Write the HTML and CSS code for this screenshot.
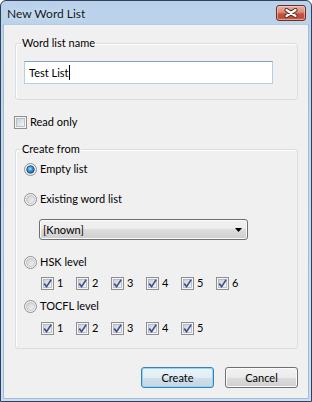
FILE: index.html
```html
<!DOCTYPE html>
<html lang="en">
<head>
  <meta charset="UTF-8" />
  <title>New Word List</title>
  <link rel="stylesheet" href="styles.css">
</head>
<body>

  <div class="window">
    <!-- Title bar -->
    <div class="titlebar">
      <span class="title">New Word List</span>
      <button class="close-btn" aria-label="Close">
        <svg width="14" height="10" viewBox="0 0 14 10">
          <path d="M2.5 2 L11.5 8 M11.5 2 L2.5 8" stroke="#4a1f1a" stroke-width="4" stroke-linecap="round" fill="none"/>
          <path d="M2.5 2 L11.5 8 M11.5 2 L2.5 8" stroke="#fff" stroke-width="2.3" stroke-linecap="round" fill="none"/>
        </svg>
      </button>
    </div>

    <!-- Dialog body -->
    <div class="client">
      <fieldset class="group group-name">
        <legend>Word list name</legend>
        <div class="textbox">Test List<span class="caret"></span></div>
      </fieldset>

      <div class="check read-only">
        <svg class="box" width="13" height="13"><use href="#cb-off"/></svg>
        <span>Read only</span>
      </div>

      <fieldset class="group group-source">
        <legend>Create from</legend>

        <div class="option opt-empty">
          <svg class="radio" width="13" height="13"><use href="#radio-on"/></svg>
          <span>Empty list</span>
        </div>

        <div class="option opt-existing">
          <svg class="radio" width="13" height="13"><use href="#radio-off"/></svg>
          <span>Existing word list</span>
        </div>

        <div class="combo">
          <span>[Known]</span>
          <svg width="7" height="4" viewBox="0 0 7 4"><path d="M0 0 H7 L3.5 4 Z" fill="#000"/></svg>
        </div>

        <div class="option opt-hsk">
          <svg class="radio" width="13" height="13"><use href="#radio-off"/></svg>
          <span>HSK level</span>
        </div>

        <div class="levels levels-hsk">
          <div class="check level"><svg class="box" width="13" height="13"><use href="#cb-on"/></svg><span>1</span></div>
          <div class="check level"><svg class="box" width="13" height="13"><use href="#cb-on"/></svg><span>2</span></div>
          <div class="check level"><svg class="box" width="13" height="13"><use href="#cb-on"/></svg><span>3</span></div>
          <div class="check level"><svg class="box" width="13" height="13"><use href="#cb-on"/></svg><span>4</span></div>
          <div class="check level"><svg class="box" width="13" height="13"><use href="#cb-on"/></svg><span>5</span></div>
          <div class="check level"><svg class="box" width="13" height="13"><use href="#cb-on"/></svg><span>6</span></div>
        </div>

        <div class="option opt-tocfl">
          <svg class="radio" width="13" height="13"><use href="#radio-off"/></svg>
          <span>TOCFL level</span>
        </div>

        <div class="levels levels-tocfl">
          <div class="check level"><svg class="box" width="13" height="13"><use href="#cb-on"/></svg><span>1</span></div>
          <div class="check level"><svg class="box" width="13" height="13"><use href="#cb-on"/></svg><span>2</span></div>
          <div class="check level"><svg class="box" width="13" height="13"><use href="#cb-on"/></svg><span>3</span></div>
          <div class="check level"><svg class="box" width="13" height="13"><use href="#cb-on"/></svg><span>4</span></div>
          <div class="check level"><svg class="box" width="13" height="13"><use href="#cb-on"/></svg><span>5</span></div>
        </div>
      </fieldset>

      <!-- Dialog buttons -->
      <div class="buttons">
        <button class="btn btn-default">Create</button>
        <button class="btn">Cancel</button>
      </div>
    </div>
  </div>

  <!-- Shared glyphs for checkboxes and radio buttons -->
  <svg class="defs" width="0" height="0">
    <defs>
      <linearGradient id="box-fill" x1="0" y1="0" x2="1" y2="1">
        <stop offset="0" stop-color="#c9ced6"/>
        <stop offset="1" stop-color="#f7f8f9"/>
      </linearGradient>
      <linearGradient id="radio-fill" x1="0" y1="0" x2="1" y2="1">
        <stop offset="0" stop-color="#c7ccd2"/>
        <stop offset="1" stop-color="#f8f8f8"/>
      </linearGradient>
      <radialGradient id="dot-fill" cx="0.45" cy="0.4" r="0.6">
        <stop offset="0" stop-color="#b5ecff"/>
        <stop offset="0.45" stop-color="#3d9ad6"/>
        <stop offset="1" stop-color="#1b5590"/>
      </radialGradient>

      <symbol id="cb-off" viewBox="0 0 13 13">
        <rect x="0.5" y="0.5" width="12" height="12" fill="#f4f4f4" stroke="#8e8f8f"/>
        <rect x="2.5" y="2.5" width="8" height="8" fill="url(#box-fill)" stroke="#b0b5bb" stroke-width="0.8"/>
      </symbol>
      <symbol id="cb-on" viewBox="0 0 13 13">
        <use href="#cb-off"/>
        <path d="M3.2 6.6 L5.6 9.6 L10.2 2.6" fill="none" stroke="#3d5191" stroke-width="1.7"/>
      </symbol>
      <symbol id="radio-off" viewBox="0 0 13 13">
        <circle cx="6.5" cy="6.5" r="6" fill="#f2f2f2" stroke="#8e8f8f"/>
        <circle cx="6.5" cy="6.5" r="4" fill="url(#radio-fill)" stroke="#b9bec4" stroke-width="0.8"/>
      </symbol>
      <symbol id="radio-on" viewBox="0 0 13 13">
        <circle cx="6.5" cy="6.5" r="6" fill="#f2f2f2" stroke="#8e8f8f"/>
        <circle cx="6.5" cy="6.5" r="3.8" fill="url(#dot-fill)" stroke="#1a4e82" stroke-width="0.8"/>
      </symbol>
    </defs>
  </svg>

</body>
</html>
```

FILE: styles.css
```css
* {
  box-sizing: border-box;
}

body {
  margin: 0;
  font-family: Lato, 'Open Sans', sans-serif;
  font-size: 11px;
  color: #000;
  background: #fff;
}

/* Window frame (Windows 7 basic look) */
.window {
  width: 312px;
  height: 402px;
  display: flex;
  flex-direction: column;
  border: 1px solid #2f4259;
  border-radius: 6px 6px 0 0;
  padding: 0 2px 2px;
  background: linear-gradient(#b9d1ea, #c6daef 40%, #cbdef1);
}

/* Title bar */
.titlebar {
  height: 23px;
  display: flex;
  align-items: flex-start;
  justify-content: space-between;
}

.title {
  padding: 5px 0 0 4px;
  font-size: 12px;
  line-height: 16px;
  color: #0e1b2b;
  text-shadow: 0 0 6px rgba(255, 255, 255, 0.9);
}

.close-btn {
  width: 30px;
  height: 16px;
  margin: 4px 3px 0 0;
  padding: 0;
  display: flex;
  align-items: center;
  justify-content: center;
  border: 1px solid #6e2d26;
  border-radius: 3px;
  background: linear-gradient(#e7b0a3 0%, #d98c79 45%, #c7553f 55%, #c24a35 80%, #d06a55 100%);
  box-shadow: inset 0 0 0 1px rgba(255, 220, 210, 0.5);
}

/* Client area */
.client {
  flex: 1;
  display: flex;
  flex-direction: column;
  border: 1px solid #a3bbd6;
  border-top-color: #b5cbe3;
  background: #f0f0f0;
  padding: 10px 10px 0 11px;
}

/* Group boxes */
.group {
  margin: 0;
  min-width: 0;
  border: 1px solid #d5dfe5;
  border-radius: 3px;
  box-shadow: inset 1px 1px 0 #fff;
  padding: 0 0 0 8px;
}

.group legend {
  margin-left: -3px;
  padding: 0 1px;
  line-height: 16px;
}

.group-name {
  padding-bottom: 15px;
}

.group-source {
  margin-top: 11px;
  padding-bottom: 12px;
}

/* Text box */
.textbox {
  width: 249px;
  height: 23px;
  margin-top: 10px;
  display: flex;
  align-items: center;
  padding-left: 4px;
  background: #fff;
  border: 1px solid #b5cfe7;
  border-top-color: #7da2ce;
}

.caret {
  width: 1px;
  height: 15px;
  margin-left: 1px;
  background: #000;
}

/* Checkboxes and radio buttons */
.check,
.option {
  display: flex;
  align-items: center;
  height: 16px;
  line-height: 16px;
}

.check .box,
.option .radio {
  flex: none;
  margin-right: 3px;
}

.read-only {
  margin: 14px 0 0 -1px;
}

.opt-empty { margin-top: 4px; }
.opt-existing { margin-top: 14px; }
.opt-hsk { margin-top: 14px; }
.opt-tocfl { margin-top: 7px; }

/* Level checkbox rows */
.levels {
  display: flex;
  margin-left: 17px;
}

.levels-hsk { margin-top: 5px; }
.levels-tocfl { margin-top: 6px; }

.level {
  width: 35px;
}

/* Drop-down list */
.combo {
  width: 209px;
  height: 21px;
  margin: 12px 0 0 15px;
  display: flex;
  align-items: center;
  justify-content: space-between;
  padding: 0 5px 0 3px;
  border: 1px solid #707070;
  border-radius: 3px;
  background: linear-gradient(#f2f2f2 0%, #ebebeb 50%, #dddddd 50%, #cfcfcf 100%);
  box-shadow: inset 0 0 0 1px #fbfbfb;
}

/* Dialog buttons */
.buttons {
  display: flex;
  justify-content: flex-end;
  gap: 11px;
  margin-top: 18px;
}

.btn {
  width: 73px;
  height: 21px;
  padding: 0;
  font: inherit;
  color: #000;
  border: 1px solid #707070;
  border-radius: 3px;
  background: linear-gradient(#f2f2f2 0%, #ebebeb 50%, #dddddd 50%, #cfcfcf 100%);
  box-shadow: inset 0 0 0 1px #fbfbfb;
}

.btn-default {
  border-color: #3c7fb1;
  background: linear-gradient(#eaf3f9 0%, #e1ecf4 50%, #d0dfea 50%, #c5d7e5 100%);
  box-shadow: inset 0 0 0 1px #8fd7f7;
}

.defs {
  display: block;
  width: 0;
  height: 0;
  overflow: hidden;
}
```
